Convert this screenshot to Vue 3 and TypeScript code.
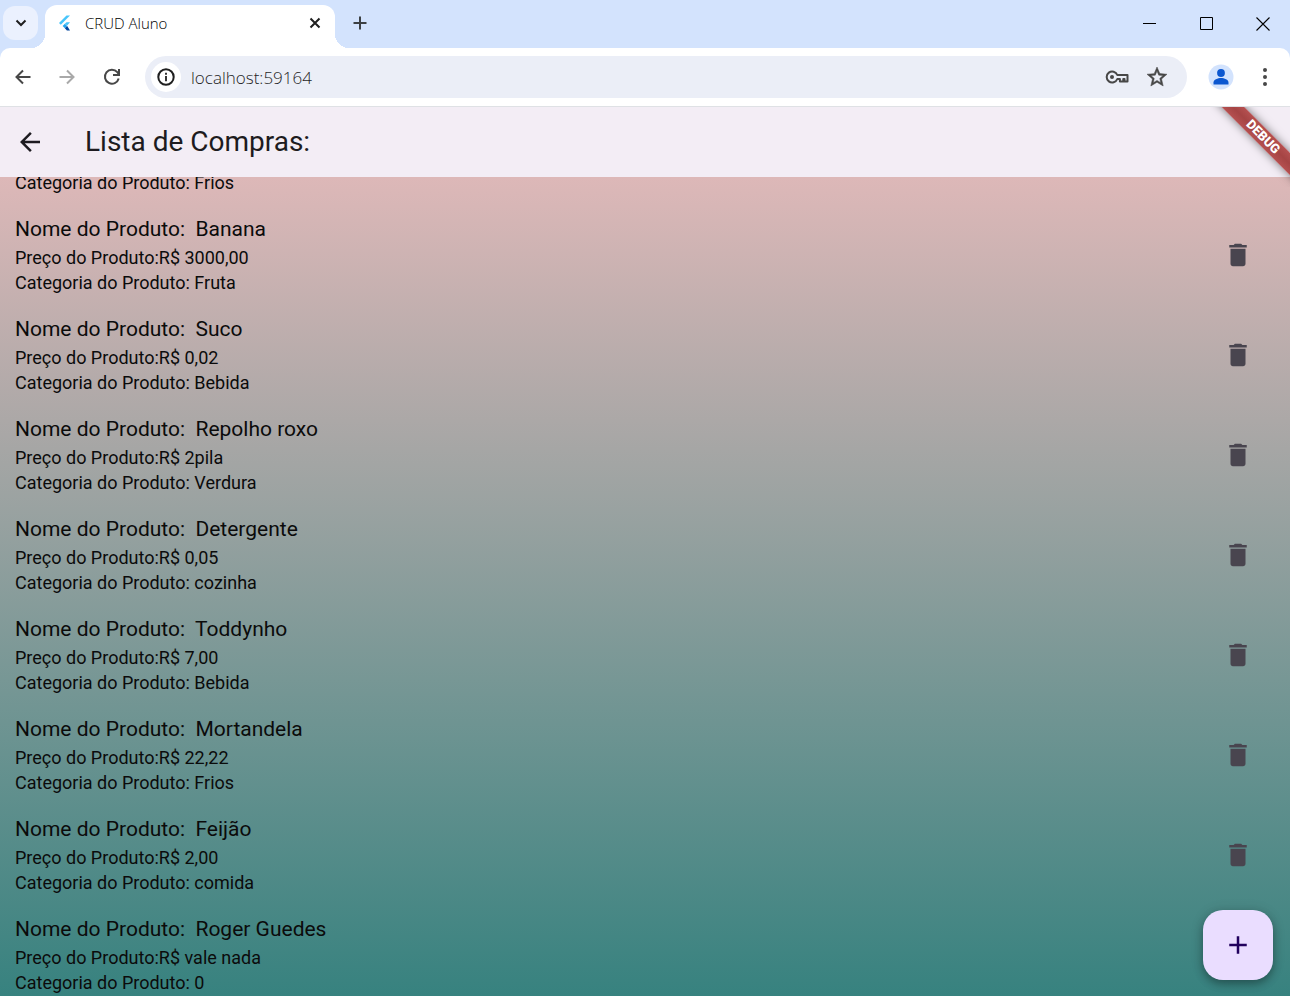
<script setup lang="ts">
import { ref } from 'vue'

interface Product {
  name: string
  price: string
  category: string
}

const address = ref('localhost:59164')
const scrolledCategory = 'Frios'

const products = ref<Product[]>([
  { name: 'Banana', price: '3000,00', category: 'Fruta' },
  { name: 'Suco', price: '0,02', category: 'Bebida' },
  { name: 'Repolho roxo', price: '2pila', category: 'Verdura' },
  { name: 'Detergente', price: '0,05', category: 'cozinha' },
  { name: 'Toddynho', price: '7,00', category: 'Bebida' },
  { name: 'Mortandela', price: '22,22', category: 'Frios' },
  { name: 'Feijão', price: '2,00', category: 'comida' },
  { name: 'Roger Guedes', price: 'vale nada', category: '0' },
])

function removeProduct(index: number): void {
  products.value.splice(index, 1)
}
</script>

<template>
  <div class="window">
    <header class="tab-strip">
      <button class="tab-search" aria-label="Search tabs">
        <svg width="16" height="16" viewBox="0 0 16 16"><path d="M3.5 5.5 8 10l4.500-4.500" fill="none" stroke="#1f1f1f" stroke-width="2" /></svg>
      </button>
      <div class="tab">
        <svg class="favicon" width="16" height="16" viewBox="0 0 16 16">
          <path d="M9.500 0.500H13L3.800 9.700 2 7.900z" fill="#47c5fb" />
          <path d="M9.500 7.200H13L10.200 10.500 7.900 8.800z" fill="#47c5fb" />
          <path d="M7.900 8.700 10.200 11 7.900 13.300 5.600 11z" fill="#22a5ee" />
          <path d="M7.900 13.300 10.200 11 13 15.500H9.900z" fill="#00459e" />
        </svg>
        <span class="tab-title">CRUD Aluno</span>
        <button class="plain tab-close" aria-label="Close tab">
          <svg width="12" height="12" viewBox="0 0 12 12"><path d="M1.500 1.500l9 9M10.500 1.500l-9 9" stroke="#1f1f1f" stroke-width="2" /></svg>
        </button>
      </div>
      <button class="plain new-tab" aria-label="New tab">
        <svg width="14" height="14" viewBox="0 0 14 14"><path d="M7 .5v13M.5 7h13" stroke="#3c4043" stroke-width="2" /></svg>
      </button>
      <div class="window-controls">
        <button class="plain control" aria-label="Minimize">
          <svg width="13" height="13" viewBox="0 0 13 13"><path d="M0 6.500h13" stroke="#000" /></svg>
        </button>
        <button class="plain control" aria-label="Maximize">
          <svg width="13" height="13" viewBox="0 0 13 13"><path d="M.5.5h12v12H.5z" fill="none" stroke="#000" /></svg>
        </button>
        <button class="plain control last" aria-label="Close">
          <svg width="14" height="14" viewBox="0 0 14 14"><path d="M.5.5l13 13M13.500.5l-13 13" stroke="#000" stroke-width="1.100" /></svg>
        </button>
      </div>
    </header>

    <nav class="toolbar">
      <button class="plain tool" aria-label="Back">
        <svg width="16" height="16" viewBox="0 0 16 16"><path d="M15.500 8H2M8 1.500 1.500 8 8 14.500" fill="none" stroke="#474747" stroke-width="2" /></svg>
      </button>
      <button class="plain tool" aria-label="Forward" disabled>
        <svg width="16" height="16" viewBox="0 0 16 16"><path d="M.5 8H14M8 1.500 14.500 8 8 14.500" fill="none" stroke="#a9a9a9" stroke-width="2" /></svg>
      </button>
      <button class="plain tool reload" aria-label="Reload">
        <svg width="18" height="18" viewBox="0 0 18 18">
          <path d="M15.700 10.500A7 7 0 1 1 14.300 4.200L16 6.300" fill="none" stroke="#474747" stroke-width="2" />
          <path d="M16 1v6h-6" fill="none" stroke="#474747" stroke-width="2" />
        </svg>
      </button>
      <div class="address-bar">
        <button class="plain site-info" aria-label="View site information">
          <svg width="18" height="18" viewBox="0 0 18 18">
            <circle cx="9" cy="9" r="7.700" fill="none" stroke="#1f1f1f" stroke-width="2" />
            <path d="M9 8v5.200M9 4.800v1.900" stroke="#1f1f1f" stroke-width="1.800" />
          </svg>
        </button>
        <input v-model="address" class="address" type="text" aria-label="Address" />
        <button class="plain bar-action" aria-label="Passwords">
          <svg width="24" height="14" viewBox="0 0 24 14">
            <path d="M12.300 5h10.200v6.500h-3V9h-1.200v2.500h-3.400V9h-2.600A5.500 5.500 0 1 1 12.300 5z" fill="none" stroke="#474747" stroke-width="2" stroke-linejoin="round" />
            <circle cx="7" cy="7" r="2" fill="#474747" />
          </svg>
        </button>
        <button class="plain bar-action" aria-label="Bookmark this tab">
          <svg width="24" height="24" viewBox="0 0 24 24">
            <path fill="#474747" stroke="#474747" stroke-width=".5" d="M22 9.240l-7.190-.62L12 2 9.190 8.630 2 9.240l5.460 4.730L5.820 21 12 17.270 18.180 21l-1.630-7.030L22 9.240zM12 15.400l-3.760 2.270 1-4.280-3.320-2.880 4.380-.38L12 6.100l1.710 4.040 4.380.38-3.320 2.880 1 4.280L12 15.400z" />
          </svg>
        </button>
      </div>
      <button class="plain tool" aria-label="Profile">
        <svg width="26" height="26" viewBox="0 0 26 26">
          <circle cx="13" cy="13" r="12.500" fill="#d3e3fd" />
          <circle cx="13" cy="9" r="3.900" fill="#0b57d0" />
          <path d="M5.500 20.500v-2c0-2.800 4.200-4.500 7.500-4.500s7.500 1.700 7.500 4.500v2z" fill="#0b57d0" />
        </svg>
      </button>
      <button class="plain tool" aria-label="Menu">
        <svg width="4" height="18" viewBox="0 0 4 18">
          <circle cx="2" cy="2" r="2" fill="#474747" /><circle cx="2" cy="9" r="2" fill="#474747" /><circle cx="2" cy="16" r="2" fill="#474747" />
        </svg>
      </button>
    </nav>

    <main class="app">
      <div class="app-bar">
        <button class="plain app-back" aria-label="Voltar">
          <svg width="30" height="30" viewBox="0 0 24 24"><path fill="#1d1b20" d="M20 11H7.830l5.590-5.590L12 4l-8 8 8 8 1.410-1.410L7.830 13H20v-2z" /></svg>
        </button>
        <h1>Lista de Compras:</h1>
      </div>
      <ul class="list">
        <li class="row scrolled">
          <p class="detail">Categoria do Produto: {{ scrolledCategory }}</p>
        </li>
        <li v-for="(product, index) in products" :key="product.name" class="row">
          <div>
            <p class="name">Nome do Produto:&nbsp; {{ product.name }}</p>
            <p class="detail">Preço do Produto:R$ {{ product.price }}</p>
            <p class="detail">Categoria do Produto: {{ product.category }}</p>
          </div>
          <button class="plain delete" :aria-label="`Excluir ${product.name}`" @click="removeProduct(index)">
            <svg width="30" height="30" viewBox="0 0 24 24"><path fill="#49454f" d="M6 19c0 1.100.9 2 2 2h8c1.100 0 2-.9 2-2V7H6v12zM19 4h-3.500l-1-1h-5l-1 1H5v2h14V4z" /></svg>
          </button>
        </li>
      </ul>
      <div class="banner"><span>DEBUG</span></div>
      <button class="plain fab" aria-label="Adicionar produto">
        <svg width="30" height="30" viewBox="0 0 24 24"><path fill="#21005d" d="M19 13h-6v6h-2v-6H5v-2h6V5h2v6h6v2z" /></svg>
      </button>
    </main>
  </div>
</template>

<style>
body {
  margin: 0;
}
</style>

<style scoped>
.window {
  display: flex;
  flex-direction: column;
  height: 100vh;
  overflow: hidden;
  background: #d3e3fd;
  font-family: 'Open Sans', 'Noto Sans', sans-serif;
}

.plain {
  display: flex;
  align-items: center;
  justify-content: center;
  flex: none;
  padding: 0;
  border: 0;
  background: none;
}

svg {
  display: block;
}

.tab-strip {
  display: flex;
  flex: none;
  height: 48px;
  padding-left: 3px;
}

.tab-search {
  display: flex;
  align-items: center;
  justify-content: center;
  flex: none;
  width: 35px;
  height: 34px;
  margin-top: 6px;
  padding: 0;
  border: 0;
  border-radius: 12px;
  background: #ebf1fe;
}

.tab {
  position: relative;
  display: flex;
  align-items: center;
  box-sizing: border-box;
  width: 290px;
  margin: 5px 0 0 7px;
  padding: 0 12px 8px;
  border-radius: 12px 12px 0 0;
  background: #fff;
}

.tab::before,
.tab::after {
  content: '';
  position: absolute;
  bottom: 0;
  width: 14px;
  height: 14px;
}

.tab::before {
  right: 100%;
  background: radial-gradient(circle at 0 0, transparent 14px, #fff 14px);
}

.tab::after {
  left: 100%;
  background: radial-gradient(circle at 100% 0, transparent 14px, #fff 14px);
}

.tab-title {
  flex: 1;
  margin-left: 12px;
  font-size: 15px;
  font-weight: 300;
  line-height: 20px;
  color: #000;
}

.tab-close {
  width: 16px;
  height: 16px;
}

.new-tab {
  width: 34px;
  height: 34px;
  margin: 6px 0 0 8px;
}

.window-controls {
  display: flex;
  margin-left: auto;
}

.control {
  width: 57px;
  height: 47px;
}

.control.last {
  width: 55px;
}

.toolbar {
  display: flex;
  align-items: center;
  flex: none;
  height: 58px;
  padding: 0 3px 0 1px;
  border-bottom: 1px solid #dfe1e5;
  border-radius: 10px 10px 0 0;
  background: #fff;
}

.tool {
  width: 44px;
  height: 44px;
}

.tool.reload {
  width: 46px;
}

.address-bar {
  display: flex;
  align-items: center;
  flex: 1;
  height: 42px;
  margin: 0 12px 0 10px;
  padding: 0 10px 0 6px;
  border-radius: 21px;
  background: #ebeef7;
}

.site-info {
  width: 30px;
  height: 30px;
  border-radius: 50%;
  background: #fff;
}

.address {
  flex: 1;
  min-width: 0;
  margin-left: 10px;
  padding: 2px 0 0;
  border: 0;
  outline: 0;
  background: none;
  color: #1f1f1f;
  font-family: inherit;
  font-size: 17px;
  font-weight: 300;
  line-height: 24px;
}

.bar-action {
  width: 40px;
  height: 36px;
}

.app {
  position: relative;
  display: flex;
  flex-direction: column;
  flex: 1;
  min-height: 0;
  overflow: hidden;
  font-family: Roboto, sans-serif;
}

.app-bar {
  display: flex;
  align-items: center;
  flex: none;
  height: 70px;
  background: #f3edf5;
}

.app-back {
  width: 60px;
  height: 60px;
}

h1 {
  margin: 0 0 0 25px;
  color: #1d1b20;
  font-size: 28px;
  font-weight: 400;
  line-height: 36px;
}

.list {
  flex: 1;
  min-height: 0;
  margin: 0;
  padding: 0;
  overflow: hidden;
  list-style: none;
  background: linear-gradient(#ddb8b8, #37827f);
  color: #0b0b0b;
}

.row {
  display: flex;
  align-items: center;
  justify-content: space-between;
  box-sizing: border-box;
  padding: 10px 22px 10px 15px;
}

.scrolled {
  align-items: flex-end;
  height: 28px;
  padding-top: 0;
}

p {
  margin: 0;
}

.name {
  padding-bottom: 2px;
  font-size: 21px;
  line-height: 28px;
}

.detail {
  font-size: 18px;
  line-height: 25px;
}

.delete {
  width: 60px;
  height: 60px;
}

.banner {
  position: absolute;
  top: 0;
  right: 0;
  width: 80px;
  height: 80px;
  overflow: hidden;
  pointer-events: none;
}

.banner span {
  position: absolute;
  top: 22px;
  left: -7px;
  width: 120px;
  height: 16px;
  background: linear-gradient(#b55050, #a54444 50%, #b55050);
  box-shadow: 0 0 10px rgba(0, 0, 0, 0.5);
  color: #fff;
  font-size: 13px;
  font-weight: 900;
  line-height: 16px;
  text-align: center;
  transform: rotate(45deg);
}

.fab {
  position: absolute;
  right: 17px;
  bottom: 16px;
  width: 70px;
  height: 70px;
  border-radius: 20px;
  background: #eaddff;
  box-shadow: 0 4px 8px rgba(0, 0, 0, 0.3), 0 1px 14px rgba(0, 0, 0, 0.12);
}
</style>
